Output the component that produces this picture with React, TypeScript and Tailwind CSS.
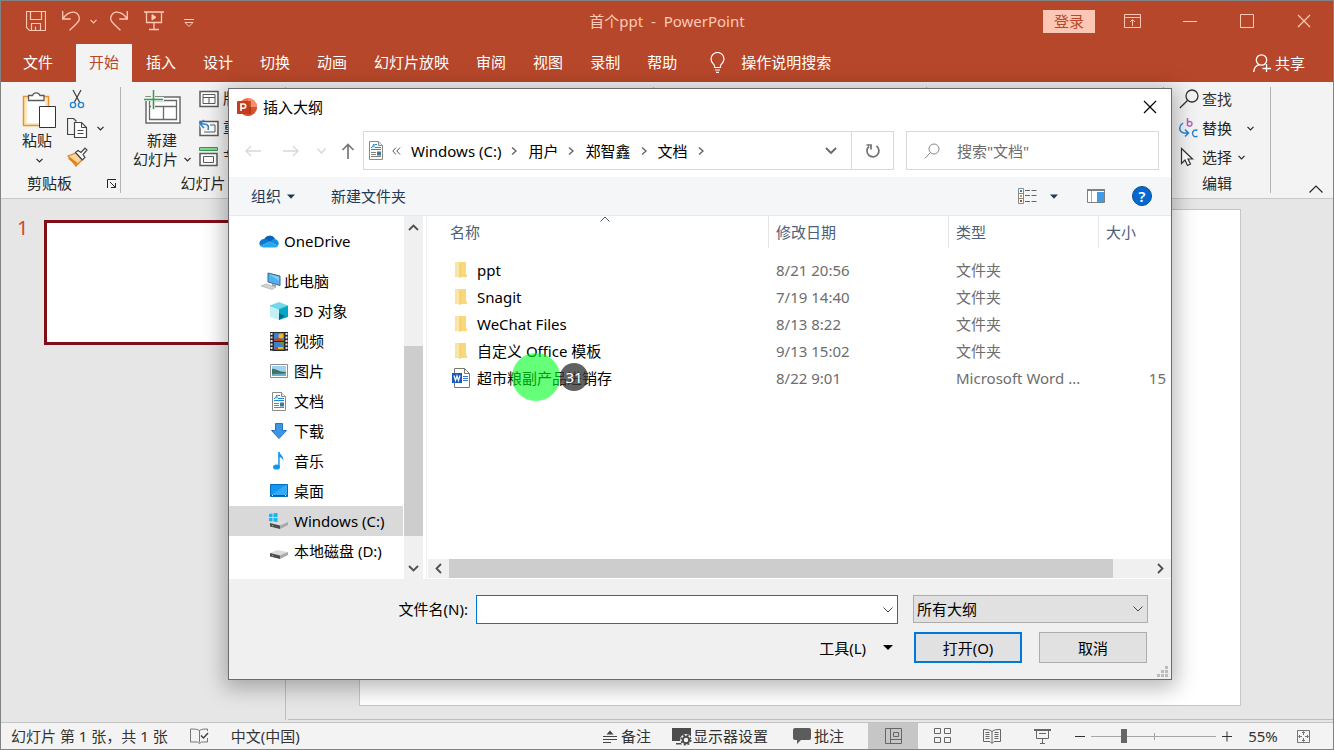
import type { ReactNode } from "react";

type IconProps = {
  w: number;
  h: number;
  children: ReactNode;
  className?: string;
};

// One drawing unit is one pixel
function Icon({ w, h, children, className = "" }: IconProps) {
  return (
    <svg
      width={w}
      height={h}
      viewBox={`0 0 ${w} ${h}`}
      fill="none"
      stroke="currentColor"
      className={`shrink-0 ${className}`}
      aria-hidden="true"
    >
      {children}
    </svg>
  );
}

function Chevron({ className = "" }: { className?: string }) {
  return (
    <Icon w={7} h={5} className={className}>
      <path d="M.5 .8 3.500 3.800 6.500 .8" strokeWidth="1.200" />
    </Icon>
  );
}

function Caret({ className = "" }: { className?: string }) {
  return (
    <Icon w={8} h={5} className={className}>
      <path d="M0 .5h8L4 4.7z" fill="currentColor" stroke="none" />
    </Icon>
  );
}

function PowerPointLogo() {
  return (
    <Icon w={20} h={20}>
      <circle cx="11" cy="10" r="9" fill="#ed6c47" stroke="none" />
      <path d="M11 1a9 9 0 0 1 9 9h-9z" fill="#ff8f6b" stroke="none" />
      <path d="M2 10h18a9 9 0 0 1-18 0z" fill="#d35230" stroke="none" />
      <path d="M5 4h9v13H5z" fill="#8f2a14" stroke="none" opacity=".6" />
      <rect x="0" y="4" width="12" height="13" rx="1" fill="#c43e1c" stroke="none" />
      <path d="M4 14V7h2.6a2 2 0 0 1 0 4.2H4" stroke="#fff" strokeWidth="1.6" />
    </Icon>
  );
}

function DocumentIcon() {
  return (
    <Icon w={16} h={19}>
      <path d="M1.500 .5h9l4 4v14h-13z" fill="#fff" stroke="#8a8a8a" />
      <path d="M10.500 .5v4h4" fill="#e6e6e6" stroke="#8a8a8a" />
      <path d="M3 6.500h1L6 3v3.500" stroke="#1e8ad6" />
      <path d="M7 3.500h2M7 6.500h6M3 8.500h10" stroke="#1e8ad6" />
      <path d="M3 11.500h5M3 13.500h5M3 15.500h10" stroke="#808080" />
      <path d="M9 10.500h4v4H9z" fill="#3f7896" stroke="none" />
    </Icon>
  );
}

function OneDriveIcon() {
  return (
    <Icon w={20} h={14}>
      <path d="M5 5.5A6.2 6.2 0 0 1 16 4.5l-3 4z" fill="#0364b8" stroke="none" />
      <path d="M4.5 5A4.4 4.4 0 0 0 1.3 12L11 7.5 8 5.5A6 6 0 0 0 4.5 5z" fill="#0f78d4" stroke="none" />
      <path d="M11 7.5l3.5-2.4A4.4 4.4 0 0 1 18.8 12z" fill="#1490df" stroke="none" />
      <path d="M1.2 12 11 7.2 19 12a3.6 3.6 0 0 1-3 1.5H4.5a4.4 4.4 0 0 1-3.3-1.5z" fill="#28a8ea" stroke="none" />
    </Icon>
  );
}

function ComputerIcon() {
  return (
    <Icon w={20} h={18}>
      <path d="M7 1l12 3v9.5L7 10z" fill="#48b3f5" stroke="#44677f" />
      <path d="M8 2l10 7V5z" fill="#82cdf9" stroke="none" />
      <path d="M11 12l4 1v2l-4-1z" fill="#9a9a9a" stroke="none" />
      <path d="M0 14l5-2 10 3-4 2.500z" fill="#d2d2d2" stroke="#aaa" strokeWidth=".6" />
    </Icon>
  );
}

function CubeIcon() {
  return (
    <Icon w={18} h={18}>
      <path d="M0 3.500 9 0l9 3.500L9 7z" fill="#73d9e8" stroke="none" />
      <path d="M0 3.500 9 7v11L0 15z" fill="#c2f1f5" stroke="none" />
      <path d="M18 3.500 9 7v11l9-3z" fill="#00a8c6" stroke="none" />
      <path d="M9 11l6 3-6 4z" fill="#046a8c" stroke="none" />
      <path d="M0 3.500 9 7l9-3.500" stroke="#4fc3d8" strokeWidth=".8" />
    </Icon>
  );
}

function VideoIcon() {
  return (
    <Icon w={18} h={19}>
      <path d="M0 0h18v19H0z" fill="#2b2b2b" stroke="none" />
      <path d="M1.500 1v18M16.500 1v18" stroke="#e4e4e4" strokeWidth="2" strokeDasharray="2 1.500" />
      <path d="M4 1h10v8H4zM4 10h10v8H4z" fill="#3f7fd0" stroke="none" />
      <path d="M4 7l6-1 4 3H4zM4 17l4-2 6 3H4z" fill="#c93c22" stroke="none" />
      <circle cx="11" cy="4" r="2.500" fill="#e7bf25" stroke="none" />
      <path d="M9 10h5l-2 4z" fill="#6a9a2e" stroke="none" />
      <path d="M8 15h5v2H8z" fill="#e7bf25" stroke="none" />
    </Icon>
  );
}

function PictureIcon() {
  return (
    <Icon w={18} h={14}>
      <path d="M.5 .5h17v13H.5z" fill="#fff" stroke="#8e8e8e" />
      <path d="M2 2h14v10H2z" fill="#9fd3f5" stroke="none" />
      <path d="M2 5c3-1 6 3 14 3v4H2z" fill="#3e7463" stroke="none" />
      <path d="M2 10.500c5-1.500 9 0 14-1.500v3H2z" fill="#6db1c9" stroke="none" />
    </Icon>
  );
}

function DownloadIcon() {
  return (
    <Icon w={18} h={18}>
      <path d="M5.500 1.500h7v7h4L9 16.500 1.500 8.500h4z" fill="#3d96e4" stroke="#2675b8" />
    </Icon>
  );
}

function MusicIcon() {
  return (
    <Icon w={18} h={18}>
      <ellipse cx="6.500" cy="15" rx="3.500" ry="2.600" fill="#1296f0" stroke="none" />
      <path d="M8.200 15V0h1.500c.5 3.500 4.800 4 3.500 9-.5-2.500-2-3.500-3.500-3.700V15z" fill="#1296f0" stroke="none" />
    </Icon>
  );
}

function DesktopIcon() {
  return (
    <Icon w={18} h={14}>
      <path d="M.5 .5h17v12H.5z" fill="#1197f4" stroke="#0a6cb4" />
      <path d="M1 11L16 1h1v10z" fill="#35aaf8" stroke="none" />
      <path d="M1 11.500h16" stroke="#0a5d9c" />
      <path d="M2 11.500h1M15 11.500h1" stroke="#fff" />
    </Icon>
  );
}

function DriveShape() {
  return (
    <>
      <path d="M1 12l7-3 11 2-7 4z" fill="#dcdcdc" stroke="none" />
      <path d="M1 12l10 2.500V18L1 15.500z" fill="#4c4c4c" stroke="none" />
      <path d="M11 14.500l8-3.500v3L11 18z" fill="#a8a8a8" stroke="none" />
      <path d="M3 14.700h1.500" stroke="#57d16c" />
    </>
  );
}

function WindowsDriveIcon() {
  return (
    <Icon w={20} h={20}>
      <DriveShape />
      <path d="M0 3l3.500-.5V6H0zM4.500 2.300 8.500 2v4h-4zM0 7h3.500v3.500L0 10zM4.500 7h4v4l-4-.5z" fill="#18b4f0" stroke="none" />
    </Icon>
  );
}

function DriveIcon() {
  return (
    <Icon w={20} h={20}>
      <DriveShape />
    </Icon>
  );
}

function FolderIcon() {
  return (
    <Icon w={14} h={18}>
      <path d="M1 1h11v12l1 1v2H1z" fill="#f9d77b" stroke="none" />
      <path d="M1 1h3l2 2v14l-5-2z" fill="#fbe5a5" stroke="none" />
      <path d="M6 3v14" stroke="#eec35e" strokeWidth=".8" />
    </Icon>
  );
}

function WordIcon() {
  return (
    <Icon w={18} h={20}>
      <path d="M2.500 .5h10l5 5v14h-15z" fill="#fff" stroke="#777" />
      <path d="M12.500 .5v5h5" stroke="#777" />
      <path d="M11 8.500h5M11 10.500h5M11 12.500h5" stroke="#3b78c9" />
      <path d="M0 5h10v10H0z" fill="#185abd" stroke="none" />
      <path d="M2 7.500l1.500 5L5 8l1.500 4.500L8 7.500" stroke="#fff" strokeWidth="1.200" />
    </Icon>
  );
}

function SearchIcon() {
  return (
    <Icon w={20} h={20}>
      <circle cx="13" cy="7" r="6" strokeWidth="1.300" />
      <path d="M8.500 11.500.8 19" strokeWidth="1.300" />
    </Icon>
  );
}

const tabs = ["开始", "插入", "设计", "切换", "动画", "幻灯片放映", "审阅", "视图", "录制", "帮助"];

const places = [
  { label: "3D 对象", icon: <CubeIcon /> },
  { label: "视频", icon: <VideoIcon /> },
  { label: "图片", icon: <PictureIcon /> },
  { label: "文档", icon: <DocumentIcon /> },
  { label: "下载", icon: <DownloadIcon /> },
  { label: "音乐", icon: <MusicIcon /> },
  { label: "桌面", icon: <DesktopIcon /> },
  { label: "Windows (C:)", icon: <WindowsDriveIcon />, selected: true },
  { label: "本地磁盘 (D:)", icon: <DriveIcon /> },
];

const files = [
  { name: "ppt", date: "8/21 20:56", type: "文件夹", size: "" },
  { name: "Snagit", date: "7/19 14:40", type: "文件夹", size: "" },
  { name: "WeChat Files", date: "8/13 8:22", type: "文件夹", size: "" },
  { name: "自定义 Office 模板", date: "9/13 15:02", type: "文件夹", size: "" },
  { name: "超市粮副产品进销存", date: "8/22 9:01", type: "Microsoft Word ...", size: "15" },
];

function TitleBar() {
  return (
    <header className="grid h-[43px] grid-cols-[1fr_auto_1fr] items-center pb-[3px] text-[#ffc9b6]">
      <div className="flex items-center pl-[25px]">
        <button aria-label="保存">
          <Icon w={20} h={20}>
            <path d="M.5 .5h19v19h-16l-3-3zM4.500 .5v8h11v-8M5.500 19.500v-7h9v7M9.500 19.500v-4" strokeWidth="1.200" />
          </Icon>
        </button>
        <button aria-label="撤消" className="ml-4">
          <Icon w={18} h={20}>
            <path d="M.7 0v8h8M.7 8C4 3 8 .8 12 1.200c4 .5 6 4.500 5 8-.6 2-3 4-9.500 10" strokeWidth="1.300" />
          </Icon>
        </button>
        <Chevron className="ml-2.5" />
        <button aria-label="恢复" className="ml-[13px]">
          <Icon w={18} h={20}>
            <path d="M17.300 0v8h-8M17.300 8C14 3 10 .8 6 1.200c-4 .5-6 4.500-5 8 .6 2 3 4 9.500 10" strokeWidth="1.300" />
          </Icon>
        </button>
        <button aria-label="从头开始" className="ml-4">
          <Icon w={20} h={20}>
            <path d="M0 1h20M2.500 1v10.500h15V1M10 11.500v7M5 18.500h10" strokeWidth="1.300" />
            <path d="M8 3.500v5.500l4-2.700z" fill="currentColor" />
          </Icon>
        </button>
        <button aria-label="自定义快速访问工具栏" className="mt-1 ml-[20px]">
          <Icon w={10} h={8}>
            <path d="M0 .5h10M1 3.500h8L5 7.500z" />
          </Icon>
        </button>
      </div>
      <h1 className="whitespace-pre">首个ppt  -  PowerPoint</h1>
      <div className="flex items-center justify-end pr-[22px]">
        <button className="mr-[29px] h-[23px] w-[52px] bg-[#fdc7b5] leading-[22px] text-[#b7472a]">登录</button>
        <button aria-label="功能区显示选项" className="mr-[42px]">
          <Icon w={17} h={14}>
            <path d="M.5 .5h16v13H.5zM.5 3.500h16M8.500 12V6M6 8l2.500-2.500L11 8" />
          </Icon>
        </button>
        <button aria-label="最小化" className="mr-[43px]">
          <Icon w={14} h={14}>
            <path d="M0 7.500h14" />
          </Icon>
        </button>
        <button aria-label="最大化" className="mr-[43px]">
          <Icon w={14} h={14}>
            <path d="M.5 .5h13v13H.5z" />
          </Icon>
        </button>
        <button aria-label="关闭">
          <Icon w={14} h={14}>
            <path d="M1 1l12 12M13 1 1 13" strokeWidth="1.200" />
          </Icon>
        </button>
      </div>
    </header>
  );
}

function TabBar() {
  return (
    <nav className="flex h-[38px] items-stretch text-white">
      <button className="w-[75px] pr-px pb-0.5 text-center">文件</button>
      <div className="flex gap-px">
        {tabs.map((tab) => (
          <button
            key={tab}
            className={`px-[13px] pb-0.5 whitespace-nowrap ${tab === "开始" ? "bg-[#f3f3f3] text-[#b7472a]" : ""}`}
          >
            {tab}
          </button>
        ))}
      </div>
      <button className="ml-5 flex items-center gap-4 pb-0.5">
        <Icon w={15} h={21}>
          <path d="M4.500 15.500v-2C3 11.500 1 10 1 7a6.500 6.500 0 0 1 13 0c0 3-2 4.500-3.500 6.500v2zM5 18h5M6 20.300h3" strokeWidth="1.200" />
        </Icon>
        操作说明搜索
      </button>
      <button className="mr-7 ml-auto flex items-center gap-1">
        <Icon w={18} h={18}>
          <circle cx="8.500" cy="6" r="5.200" strokeWidth="1.300" />
          <path d="M.7 18c.3-4 2.500-6.500 5.500-7.300M13.500 10v8M9.500 14.500H18" strokeWidth="1.300" />
        </Icon>
        共享
      </button>
    </nav>
  );
}

function Ribbon() {
  return (
    <div className="flex h-[117px] border-b border-[#c8c8c8] bg-[#f3f3f3] pt-[5px] pb-[5px] leading-[19px] text-[#262626]">
      <section className="flex w-[120px] shrink-0 flex-col border-r border-[#b4b4b4]">
        <div className="flex h-[91px] pl-[21px]">
          <button className="flex w-[34px] flex-col items-center pt-1">
            <Icon w={34} h={38} className="text-[#595959]">
              <path d="M1.500 5.500h25v29h-25z" fill="#fde8c2" stroke="#e8932c" strokeWidth="1.500" />
              <path d="M5 8h18v24H5z" fill="#fff" stroke="none" />
              <path d="M6.500 9.500v-5h4a4 4 0 0 1 7.500 0h4v5z" fill="#fff" strokeWidth="1.300" />
              <path d="M17.500 15.500h16v21h-16z" fill="#fff" stroke="#333" />
            </Icon>
            <span className="mt-0.5 -ml-1 w-[30px]">粘贴</span>
            <Chevron className="mt-2" />
          </button>
          <div className="ml-[11px] flex flex-col gap-[9px] pt-[2px]">
            <button aria-label="剪切">
              <Icon w={20} h={20}>
                <path d="M6 1l6.500 12M14 1 7.500 13" stroke="#444" strokeWidth="1.300" />
                <circle cx="6" cy="16" r="2.600" stroke="#2483d5" strokeWidth="1.400" />
                <circle cx="14" cy="16" r="2.600" stroke="#2483d5" strokeWidth="1.400" />
              </Icon>
            </button>
            <button aria-label="复制" className="flex items-center gap-[9px]">
              <Icon w={21} h={20} className="text-[#444]">
                <path d="M7.500 16.500h-7V.5h6l3 3" strokeWidth="1.200" />
                <path d="M7.500 4.500h7l5 5v10h-12z" fill="#fff" strokeWidth="1.200" />
                <path d="M14.500 4.500v5h5M10.500 12.500h6M10.500 15.500h6" />
              </Icon>
              <Chevron />
            </button>
            <button aria-label="格式刷">
              <Icon w={21} h={20}>
                <path d="M1 9l8-3 6 7-6 6z" fill="#f9d79c" stroke="#e3811c" strokeWidth="1.300" />
                <path d="M2 11l8 6" stroke="#e3811c" strokeWidth="2.500" />
                <path d="M8.500 5.500l2.500-2 3 2 4-4.500 2 2-4 4.500 2 3-2.500 2.500z" fill="#fff" stroke="#444" strokeWidth="1.200" />
              </Icon>
            </button>
          </div>
        </div>
        <div className="flex items-center justify-between pr-[4px] pl-[26px]">
          剪贴板
          <button aria-label="剪贴板选项">
            <Icon w={9} h={9}>
              <path d="M.5 9V.5H9M3 3l5 5M8.500 4v4.500H4" />
            </Icon>
          </button>
        </div>
      </section>
      <section className="flex w-[165px] shrink-0 flex-col border-r border-[#b4b4b4]">
        <div className="flex h-[91px] gap-2 pl-3">
          <button className="flex w-[58px] flex-col items-center pt-0.5">
            <Icon w={38} h={36} className="text-[#6a6a6a]">
              <path d="M3 8h34v26H3z" fill="#fff" strokeWidth="1.500" />
              <path d="M6.500 11.500h27v19h-27zM6.500 17.500h27M20.500 17.500v13" strokeWidth="1.300" />
              <path d="M0 10h21M10 0v21" stroke="#f3f3f3" strokeWidth="4" />
              <path d="M1 10.500h19M10.500 1v19" stroke="#2f9e4d" strokeWidth="1.500" />
            </Icon>
            <span className="mt-1.5">新建</span>
            <span className="flex items-center gap-1.5 whitespace-nowrap">
              幻灯片
              <Chevron />
            </span>
          </button>
          <div className="flex flex-col gap-[10px] pt-[2px] whitespace-nowrap">
            <button className="flex items-center gap-1">
              <Icon w={20} h={18} className="text-[#5b5b5b]">
                <path d="M1 1.500h18v15H1z" fill="#fff" strokeWidth="1.500" />
                <path d="M4 4.500h12v9H4zM4 7.500h12M10 7.500v6" />
              </Icon>
              版式
            </button>
            <button className="flex items-center gap-1">
              <Icon w={20} h={18} className="text-[#5b5b5b]">
                <path d="M1 2.500h18v14H1z" fill="#fff" strokeWidth="1.500" />
                <path d="M11 6h5v7H5" />
                <path d="M0 5h8v7H3z" fill="#f3f3f3" stroke="none" />
                <path d="M5 1 1 5l4 4M1 5h4c4 0 5 2 4 6" stroke="#2483d5" strokeWidth="1.500" />
              </Icon>
              重置
            </button>
            <button className="flex items-center gap-1">
              <Icon w={20} h={20} className="text-[#5b5b5b]">
                <path d="M.5 .5h18v3H.5z" fill="#8fcf9d" stroke="#2f9e4d" />
                <path d="M1 6.500h17v12H1z" fill="#fff" strokeWidth="1.500" />
                <path d="M4.500 9.500h10v6h-10z" />
              </Icon>
              节
            </button>
          </div>
        </div>
        <div className="text-center">幻灯片</div>
      </section>
      <section className="flex-[368] border-r border-[#b4b4b4]" />
      <section className="flex-[272] border-r border-[#b4b4b4]" />
      <section className="flex-[237] border-r border-[#b4b4b4]" />
      <section className="flex w-[107px] shrink-0 flex-col border-r border-[#b4b4b4] pl-[15px]">
        <div className="flex h-[91px] flex-col gap-[9px] pt-[2px]">
          <button className="flex items-center gap-[3px] text-[#333]">
            <SearchIcon />
            查找
          </button>
          <button className="flex items-center gap-[3px]">
            <Icon w={20} h={20} className="text-[#2483d5]">
              <path d="M4 5C-.5 8-.5 14 5 15h4M6 11.500l3.500 3.500L6 18.500" strokeWidth="1.500" />
              <path d="M8.500 0v8M8.500 4.500c2-2 4.500-.8 4.500 1.300s-2.500 3.300-4.500 1.500" stroke="#b55fbd" strokeWidth="1.500" />
              <path d="M18.500 12.300c-2.500-1-5 0-5 3s2.500 4 5 3" strokeWidth="1.500" />
            </Icon>
            替换
            <Chevron className="ml-3" />
          </button>
          <button className="flex items-center gap-[3px]">
            <Icon w={20} h={20} className="text-[#333]">
              <path d="M2.500 1.500v15l3.500-3.500 2.500 5.500 3-1.500L9 12h4.500z" fill="#fff" strokeWidth="1.200" />
            </Icon>
            选择
            <Chevron className="ml-[3px]" />
          </button>
        </div>
        <div className="pl-[23px]">编辑</div>
      </section>
      <div className="flex w-[62px] shrink-0 items-end justify-end pr-[10px]">
        <button aria-label="折叠功能区">
          <Icon w={14} h={8}>
            <path d="M.5 7.500 7 1l6.500 6.500" strokeWidth="1.200" />
          </Icon>
        </button>
      </div>
    </div>
  );
}

function Workspace() {
  return (
    <main className="flex flex-1 bg-[#e6e6e6]">
      <aside className="mb-[2px] flex w-[285px] shrink-0 items-start border-r border-[#bdbdbd] pt-[21px] pl-4">
        <span className="w-[27px] text-[20px] leading-4 text-[#d24726]">1</span>
        <div className="h-[125px] w-[222px] border-[3px] border-[#7f0e18] bg-white" />
      </aside>
      <div className="mb-[2px] ml-[2px] flex flex-1 flex-col border-b border-[#bdbdbd]">
        <div className="mt-[10px] mr-[92px] ml-[71px] aspect-[882/497] border border-[#c6c6c6] bg-white" />
      </div>
    </main>
  );
}

function StatusBar() {
  return (
    <footer className="flex h-[27px] items-stretch border-t border-[#c2c2c2] bg-[#f3f3f3] text-[#333]">
      <div className="flex items-center gap-[22px] pl-2.5">
        <span>幻灯片 第 1 张，共 1 张</span>
        <button aria-label="拼写检查">
          <Icon w={19} h={16} className="text-[#777]">
            <path d="M9.500 14.500V2.500c-2-1.500-6-1.500-9-1.500v13h7l2 1.500 2-1.500h6v-4M9.500 2.500c2-1.500 5-1.500 8-1.500v2" />
            <path d="M11 7.500l2.500 2.500 4.500-5" stroke="#444" strokeWidth="1.500" />
          </Icon>
        </button>
        <span>中文(中国)</span>
      </div>
      <div className="ml-auto flex items-stretch">
        <button className="flex items-center gap-1">
          <Icon w={14} h={13} className="text-[#444]">
            <path d="M3.500 4.500 7 .5l3.500 4z" fill="currentColor" stroke="none" />
            <path d="M0 6.500h14M0 9.500h14M0 12.500h8" />
          </Icon>
          备注
        </button>
        <button className="ml-[21px] flex items-center gap-px">
          <Icon w={20} h={19}>
            <path d="M0 1h19v13H0zM4 16h6v1.500H4z" fill="#4c4c4c" stroke="none" />
            <circle cx="14" cy="13" r="6" fill="#f3f3f3" stroke="none" />
            <circle cx="14" cy="13" r="3.200" stroke="#4c4c4c" strokeWidth="2" />
            <circle cx="14" cy="13" r="4.800" stroke="#4c4c4c" strokeWidth="1.500" strokeDasharray="2 1.800" />
          </Icon>
          显示器设置
        </button>
        <button className="mr-[24px] ml-[25px] flex items-center gap-[3px]">
          <Icon w={18} h={16}>
            <path d="M2 0h14a2 2 0 0 1 2 2v8a2 2 0 0 1-2 2H8l-4 4v-4H2a2 2 0 0 1-2-2V2a2 2 0 0 1 2-2z" fill="#5c5c5c" stroke="none" />
          </Icon>
          批注
        </button>
        <button aria-label="普通视图" className="flex w-[50px] items-center justify-center bg-[#c6c6c6] text-[#666]">
          <Icon w={17} h={16}>
            <path d="M.5 .5h16v15H.5zM5.500 .5v15M5.500 11.500h11M8.500 4.500h5v4h-5z" />
          </Icon>
        </button>
        <button aria-label="幻灯片浏览" className="flex w-[49px] items-center justify-center text-[#666]">
          <Icon w={17} h={16}>
            <path d="M.5 .5h6v5h-6zM10.500 .5h6v5h-6zM.5 9.500h6v5h-6zM10.500 9.500h6v5h-6z" />
          </Icon>
        </button>
        <button aria-label="阅读视图" className="flex w-[50px] items-center justify-center text-[#666]">
          <Icon w={18} h={15}>
            <path d="M9 2.500C7 .5 4 .5 .5 .5v12h6.500l2 2 2-2h6.500V.5C14 .5 11 .5 9 2.500zM9 2v12" />
            <path d="M2.500 3.500h4M2.500 5.500h4M2.500 7.500h4M2.500 9.500h4M11.500 3.500h4M11.500 5.500h4M11.500 7.500h4M11.500 9.500h4" />
          </Icon>
        </button>
        <button aria-label="幻灯片放映" className="flex w-[50px] items-center justify-center text-[#666]">
          <Icon w={17} h={15}>
            <path d="M0 1h17" strokeWidth="2" />
            <path d="M2.500 1v8.500h12V1M5 4.500h7M8.500 9.500v5M6 14.500h5" />
          </Icon>
        </button>
        <button aria-label="缩小" className="ml-2">
          <Icon w={10} h={11}>
            <path d="M0 5.500h10" />
          </Icon>
        </button>
        <div className="relative mx-1.5 flex w-[125px] items-center">
          <span className="absolute inset-x-0 top-[13px] h-px bg-[#a6a6a6]" />
          <span className="absolute top-[10px] left-1/2 h-[7px] w-px bg-[#a6a6a6]" />
          <input
            type="range"
            aria-label="缩放"
            defaultValue={25}
            className="relative h-[14px] w-full appearance-none bg-transparent [&::-webkit-slider-thumb]:h-[14px] [&::-webkit-slider-thumb]:w-[6px] [&::-webkit-slider-thumb]:appearance-none [&::-webkit-slider-thumb]:bg-[#666]"
          />
        </div>
        <button aria-label="放大">
          <Icon w={10} h={11}>
            <path d="M0 5.500h10M5 .5v10" />
          </Icon>
        </button>
        <button className="ml-[15px] w-[32px]">55%</button>
        <button aria-label="适应窗口" className="mr-[23px] ml-[18px] text-[#666]">
          <Icon w={13} h={13}>
            <path d="M.5 .5h12v12H.5zM6.500 2v3M6.500 8v3M2 6.500h3M8 6.500h3M5 3l1.500-1.500L8 3M5 10l1.500 1.500L8 10M3 5 1.500 6.500 3 8M10 5l1.500 1.500L10 8" strokeWidth=".9" />
          </Icon>
        </button>
      </div>
    </footer>
  );
}

function AddressBar() {
  const crumbs = ["Windows (C:)", "用户", "郑智鑫", "文档"];
  return (
    <div className="mt-[6px] flex h-[39px] items-stretch pr-3">
      <div className="flex w-[134px] shrink-0 items-center pl-4 text-[#d8d8d8]">
        <button aria-label="后退">
          <Icon w={16} h={12}>
            <path d="M16 6H1M6 1 1 6l5 5" strokeWidth="1.400" />
          </Icon>
        </button>
        <button aria-label="前进" className="ml-[22px]">
          <Icon w={16} h={12}>
            <path d="M0 6h15M10 1l5 5-5 5" strokeWidth="1.400" />
          </Icon>
        </button>
        <button aria-label="最近位置" className="ml-[18px]">
          <Icon w={9} h={6}>
            <path d="M.5 .5 4.500 5l4-4.500" strokeWidth="1.500" />
          </Icon>
        </button>
        <button aria-label="上移" className="ml-[15px] text-[#777]">
          <Icon w={14} h={16}>
            <path d="M7 16V1.500M1.500 7 7 1.500 12.500 7" strokeWidth="1.700" />
          </Icon>
        </button>
      </div>
      <div className="flex flex-1 items-center border border-[#d9d9d9] pl-1 whitespace-nowrap">
        <DocumentIcon />
        <Icon w={9} h={8} className="ml-2 text-[#555]">
          <path d="M4 .5.8 4 4 7.500M8 .5 4.800 4 8 7.500" />
        </Icon>
        {crumbs.map((crumb) => (
          <span key={crumb} className="flex items-center">
            <button className="mx-2.5">{crumb}</button>
            <Icon w={7} h={10} className="text-[#666]">
              <path d="M1 1.500 5 5 1 8.500" strokeWidth="1.400" />
            </Icon>
          </span>
        ))}
        <button aria-label="展开路径" className="mr-[14px] ml-auto text-[#666]">
          <Icon w={12} h={8}>
            <path d="M1 1l5 5 5-5" strokeWidth="1.800" />
          </Icon>
        </button>
        <button aria-label="刷新" className="flex w-[42px] items-center justify-center self-stretch border-l border-[#d9d9d9] text-[#707070]">
          <Icon w={16} h={16}>
            <path d="M4 3.300a6 6 0 1 0 7.500-.3M1.500 2h4.500v4.500" strokeWidth="1.700" />
          </Icon>
        </button>
      </div>
      <label className="ml-3 flex w-[253px] shrink-0 items-center gap-[17px] border border-[#d9d9d9] pl-[17px] text-[#888]">
        <Icon w={16} h={16}>
          <circle cx="10" cy="6" r="5" />
          <path d="M6.500 9.500.8 15.500" />
        </Icon>
        <input aria-label="搜索" placeholder={'搜索"文档"'} className="w-full min-w-0 outline-none placeholder:text-[#6d6d6d]" />
      </label>
    </div>
  );
}

function CommandBar() {
  return (
    <div className="mt-[7px] flex h-[39px] items-center border-b border-[#e8e8e8] bg-[#f5f6f7] pl-[22px] text-[#1e395b]">
      <button className="flex items-center gap-[6px]">
        组织
        <Caret />
      </button>
      <button className="ml-[36px]">新建文件夹</button>
      <button aria-label="更改视图" className="ml-auto flex items-center gap-[13px]">
        <Icon w={19} h={16}>
          <path d="M.5 .5h5v15h-5zM.5 5.500h5M.5 10.500h5" fill="#fff" stroke="#888" />
          <path d="M7 2.500h12M7 7.500h12M7 13.500h12" stroke="#666" strokeDasharray="5 1.500" />
          <path d="M2 2h2v2H2z" fill="#2c82c9" stroke="none" />
          <path d="M2 7h2v2H2z" fill="#c79c2b" stroke="none" />
          <path d="M2 12h2v2H2z" fill="#c7432b" stroke="none" />
        </Icon>
        <Caret />
      </button>
      <button aria-label="预览窗格" className="ml-[29px]">
        <Icon w={18} h={14}>
          <path d="M.5 .5h17v13H.5z" fill="#fff" stroke="#808080" />
          <path d="M0 1h18" stroke="#808080" strokeWidth="2" />
          <path d="M4.500 2v11" stroke="#aaa" />
          <path d="M10 3h7v10h-7z" fill="#3f9ce8" stroke="none" />
        </Icon>
      </button>
      <button aria-label="帮助" className="mr-[19px] ml-[27px] h-5 w-5 rounded-full border border-[#084f94] bg-[#0369cf] leading-[17px] font-semibold text-white">
        ?
      </button>
    </div>
  );
}

function NavigationPane() {
  return (
    <div className="flex w-[198px] shrink-0 border-r border-[#f0f0f0]">
      <nav className="w-[174px] pt-2.5 pb-[13px]">
        <button className="mb-2.5 flex h-[30px] w-full items-center gap-[5px] pl-[30px]">
          <OneDriveIcon />
          OneDrive
        </button>
        <button className="flex h-[30px] w-full items-center gap-[3px] pl-8">
          <ComputerIcon />
          此电脑
        </button>
        {places.map((place) => (
          <button
            key={place.label}
            className={`flex h-[30px] w-full items-center gap-[5px] pl-10 whitespace-nowrap ${place.selected ? "bg-[#d9d9d9]" : ""}`}
          >
            <span className="flex w-5 justify-center">{place.icon}</span>
            {place.label}
          </button>
        ))}
      </nav>
      <div className="ml-px flex w-[19px] flex-col bg-[#f0f0f0] text-[#505050]">
        <div className="flex flex-[130] items-start justify-center">
          <Icon w={11} h={7} className="mt-2">
            <path d="M1 6l4.500-4.500L10 6" strokeWidth="1.800" />
          </Icon>
        </div>
        <div className="flex-[190] bg-[#cdcdcd]" />
        <div className="flex flex-[43] items-end justify-center">
          <Icon w={11} h={7} className="mb-[7px]">
            <path d="M1 1l4.500 4.500L10 1" strokeWidth="1.800" />
          </Icon>
        </div>
      </div>
    </div>
  );
}

function FileList() {
  return (
    <div className="flex min-w-0 flex-1 flex-col">
      <table className="w-full table-fixed border-separate border-spacing-0 text-left text-[#6d6d6d]">
        <thead className="text-[#4c607a]">
          <tr className="h-8">
            <th className="relative pl-[23px] font-normal">
              名称
              <Icon w={10} h={6} className="absolute top-0 right-[158px] text-[#555]">
                <path d="M.5 5.500 5 1l4.500 4.500" />
              </Icon>
            </th>
            <th className="w-[180px] border-l border-[#e5e5e5] pl-[7px] font-normal">修改日期</th>
            <th className="w-[150px] border-l border-[#e5e5e5] pl-[7px] font-normal">类型</th>
            <th className="w-[73px] border-l border-[#e5e5e5] pl-[7px] font-normal">大小</th>
          </tr>
        </thead>
        <tbody>
          <tr className="h-2" />
          {files.map((file) => (
            <tr key={file.name} className="h-[27px]">
              <td className="pl-[25px] text-black">
                <span className="flex items-center gap-[7px]">
                  <span className="flex w-[18px] justify-center">{file.size ? <WordIcon /> : <FolderIcon />}</span>
                  {file.name}
                </span>
              </td>
              <td className="pl-2">{file.date}</td>
              <td className="pl-2 whitespace-nowrap">{file.type}</td>
              <td className="pr-[5px] text-right">{file.size}</td>
            </tr>
          ))}
        </tbody>
      </table>
      <div className="mt-auto mb-px ml-px flex h-[19px] items-stretch bg-[#f0f0f0] text-[#505050]">
        <span className="flex w-[21px] items-center justify-center">
          <Icon w={7} h={11}>
            <path d="M6 1 1.500 5.500 6 10" strokeWidth="1.800" />
          </Icon>
        </span>
        <span className="flex-[663] bg-[#cdcdcd]" />
        <span className="flex flex-[58] items-center justify-end">
          <Icon w={7} h={11} className="mr-[7px]">
            <path d="M1 1l4.500 4.500L1 10" strokeWidth="1.800" />
          </Icon>
        </span>
      </div>
    </div>
  );
}

function DialogFooter() {
  return (
    <div className="relative flex flex-col gap-2 bg-[#f0f0f0] pt-4 pr-[23px] pb-4">
      <div className="flex items-start">
        <label htmlFor="filename" className="w-[247px] shrink-0 pr-2 text-right leading-[29px]">
          文件名(N):
        </label>
        <div className="relative flex-1">
          <input id="filename" className="h-[29px] w-full border border-[#0078d7] bg-white px-1 outline-none" />
          <Icon w={10} h={6} className="absolute top-3 right-[5px] text-[#444]">
            <path d="M.5 .5 5 5 9.500 .5" />
          </Icon>
        </div>
        <div className="relative ml-[15px] w-[235px]">
          <select aria-label="文件类型" className="h-7 w-full appearance-none border border-[#adadad] bg-[#e1e1e1] pl-[3px]">
            <option>所有大纲</option>
          </select>
          <Icon w={10} h={6} className="pointer-events-none absolute top-[11px] right-[5px] text-[#444]">
            <path d="M.5 .5 5 5 9.500 .5" />
          </Icon>
        </div>
      </div>
      <div className="flex items-center justify-end">
        <button className="flex items-center gap-[17px]">
          工具(L)
          <Icon w={10} h={5}>
            <path d="M0 0h10L5 5z" fill="#000" stroke="none" />
          </Icon>
        </button>
        <button className="ml-[21px] h-[31px] w-[108px] border-2 border-[#0078d7] bg-[#e1e1e1] leading-[26px]">打开(O)</button>
        <button className="mr-px ml-[17px] h-[31px] w-[108px] border border-[#adadad] bg-[#e1e1e1] leading-[28px]">取消</button>
      </div>
      <Icon w={11} h={11} className="absolute right-[3px] bottom-[2px] text-[#bcbcbc]">
        <path d="M8 0h3v3H8zM8 4h3v3H8zM8 8h3v3H8zM4 4h3v3H4zM4 8h3v3H4zM0 8h3v3H0z" fill="currentColor" stroke="none" />
      </Icon>
    </div>
  );
}

function OpenDialog() {
  return (
    <div
      role="dialog"
      aria-label="插入大纲"
      className="absolute top-[87px] right-[161px] left-[227px] border border-[#6b6b6b] bg-white text-black shadow-[0_4px_20px_4px_rgba(0,0,0,0.28)]"
    >
      <div className="flex h-9 items-center gap-1.5 pr-[14px] pl-2">
        <PowerPointLogo />
        <h2>插入大纲</h2>
        <button aria-label="关闭" className="ml-auto">
          <Icon w={14} h={14}>
            <path d="M1 1l12 12M13 1 1 13" strokeWidth="1.200" />
          </Icon>
        </button>
      </div>
      <AddressBar />
      <CommandBar />
      <div className="flex">
        <NavigationPane />
        <FileList />
      </div>
      <DialogFooter />
    </div>
  );
}

export default function App() {
  return (
    <div className="relative flex min-h-screen flex-col border border-[#828282] bg-[#b7472a] font-['Noto_Sans','Noto_Sans_CJK_SC',sans-serif] text-[15px] leading-5">
      <TitleBar />
      <TabBar />
      <Ribbon />
      <Workspace />
      <StatusBar />
      <OpenDialog />
      {/* Click marker and cursor timer on top of everything */}
      <div className="pointer-events-none absolute top-[352px] left-[511px] h-12 w-12 rounded-full bg-[#00ff22]/60" />
      <div className="pointer-events-none absolute top-[362px] left-[559px] h-7 w-7 rounded-full bg-[#3a3a3a]/80 text-center leading-7 text-white">
        31
      </div>
    </div>
  );
}
